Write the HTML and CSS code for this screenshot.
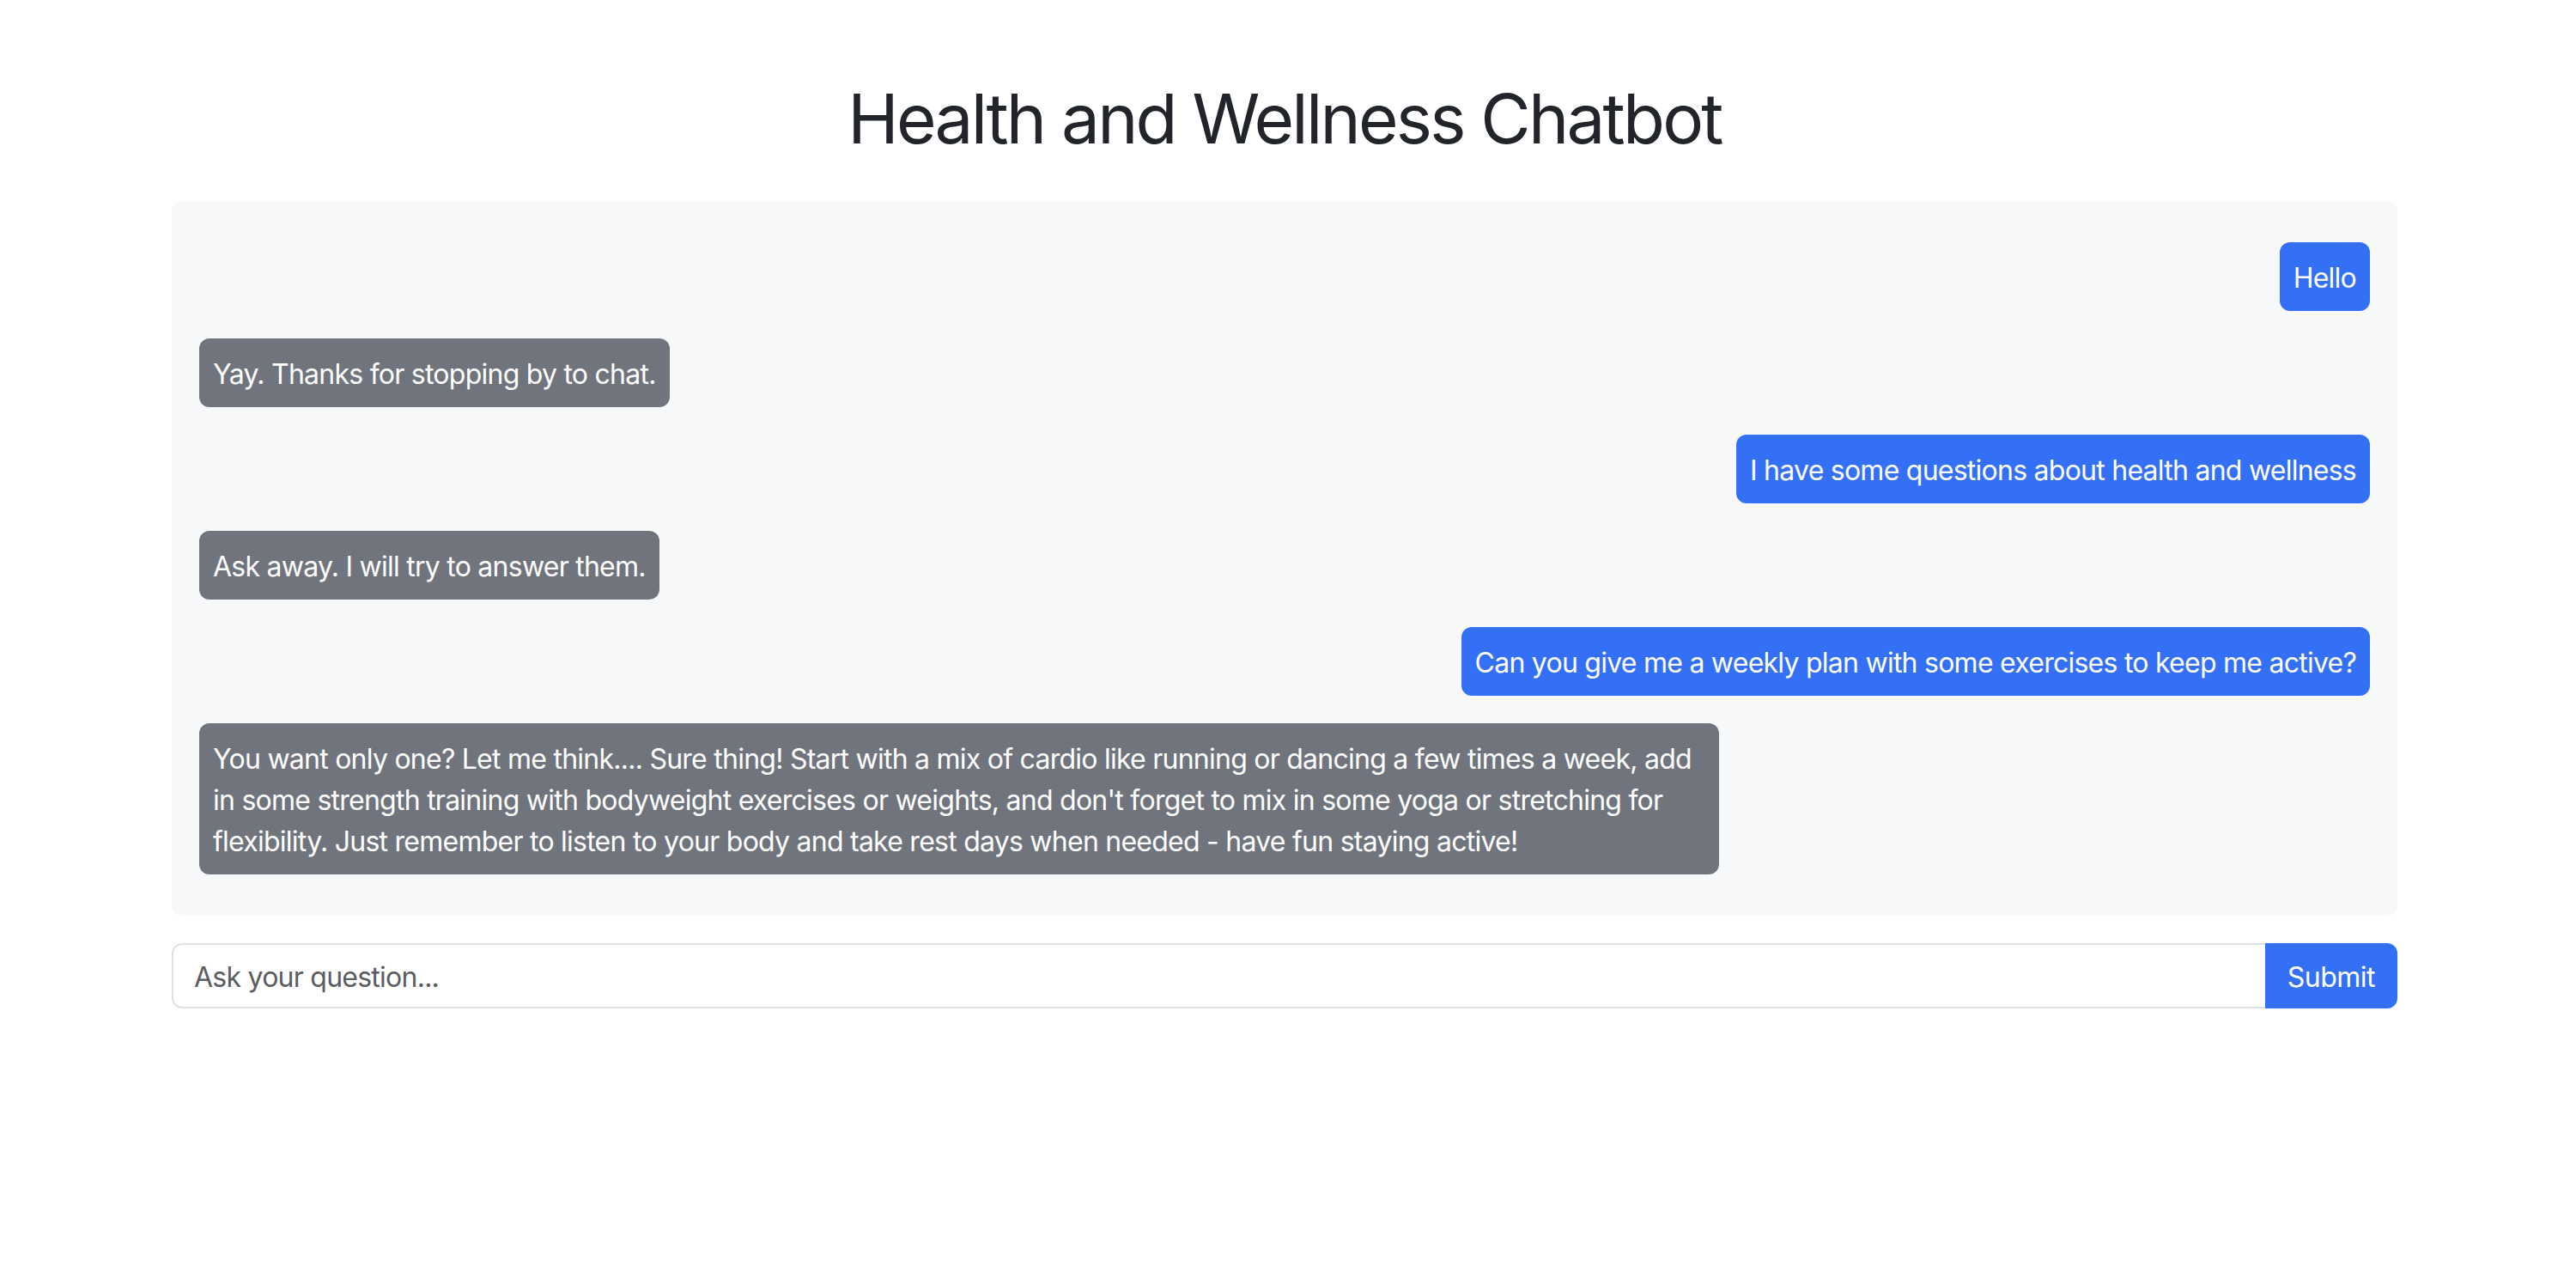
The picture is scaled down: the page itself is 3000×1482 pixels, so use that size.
FILE: index.html
```html
<!DOCTYPE html>
<html lang="en">
<head>
<meta charset="utf-8">
<title>Health and Wellness Chatbot</title>
<link rel="stylesheet" href="styles.css">
</head>
<body>
<div class="container">
  <h1 class="title">Health and Wellness Chatbot</h1>
  <div class="chat">
    <div class="row user"><div class="bubble bubble-user">Hello</div></div>
    <div class="row bot"><div class="bubble bubble-bot">Yay. Thanks for stopping by to chat.</div></div>
    <div class="row user"><div class="bubble bubble-user">I have some questions about health and wellness</div></div>
    <div class="row bot"><div class="bubble bubble-bot">Ask away. I will try to answer them.</div></div>
    <div class="row user"><div class="bubble bubble-user">Can you give me a weekly plan with some exercises to keep me active?</div></div>
    <div class="row bot"><div class="bubble bubble-bot">You want only one? Let me think.... Sure thing! Start with a mix of cardio like running or dancing a few times a week, add in some strength training with bodyweight exercises or weights, and don't forget to mix in some yoga or stretching for flexibility. Just remember to listen to your body and take rest days when needed - have fun staying active!</div></div>
  </div>
  <form class="ask">
    <input class="ask-input" type="text" placeholder="Ask your question...">
    <button class="ask-btn" type="button">Submit</button>
  </form>
</div>
</body>
</html>
```
FILE: styles.css
```css
* { box-sizing: border-box; }
html, body { margin: 0; background: #ffffff; }
body {
  padding: 0 8px 0 0;
  font-family: Inter, "Noto Sans", "Liberation Sans", sans-serif;
  color: #212529;
  font-size: 32px;
  line-height: 1.5;
  letter-spacing: -0.75px;
}
.container {
  width: 2592px;
  margin: 0 auto;
  padding-top: 90px;
}
.title {
  margin: 0 0 48px 0;
  font-size: 80px;
  font-weight: 400;
  line-height: 1.2;
  text-align: center;
  letter-spacing: -2.8px;
  color: #212529;
}
.chat {
  background: #f7f8fa;
  border-radius: 12px;
  padding: 48px 32px;
  display: flex;
  flex-direction: column;
  gap: 32px;
}
.row { display: flex; }
.row.user { justify-content: flex-end; }
.row.bot { justify-content: flex-start; }
.bubble {
  max-width: 70%;
  padding: 18px 16px 14px 16px;
  border-radius: 12px;
  color: #ffffff;
  font-size: 32px;
  line-height: 48px;
}
.bubble-user { background: #3370f5; }
.bubble-bot { background: #70757d; }
.ask {
  margin: 32px 0 0 0;
  display: flex;
}
.ask-input {
  flex: 1;
  height: 76px;
  border: 2px solid #dee2e6;
  border-right: none;
  border-radius: 12px 0 0 12px;
  padding: 2px 24px 0 24px;
  font-family: inherit;
  font-size: 32px;
  letter-spacing: -0.75px;
  color: #212529;
  background: #fff;
  outline: none;
}
.ask-input::placeholder { color: #5a5d61; }
.ask-btn {
  height: 76px;
  padding: 2px 26px 0 26px;
  border: none;
  border-radius: 0 12px 12px 0;
  background: #3370f5;
  color: #fff;
  font-family: inherit;
  font-size: 32px;
  letter-spacing: -0.5px;
}
```
